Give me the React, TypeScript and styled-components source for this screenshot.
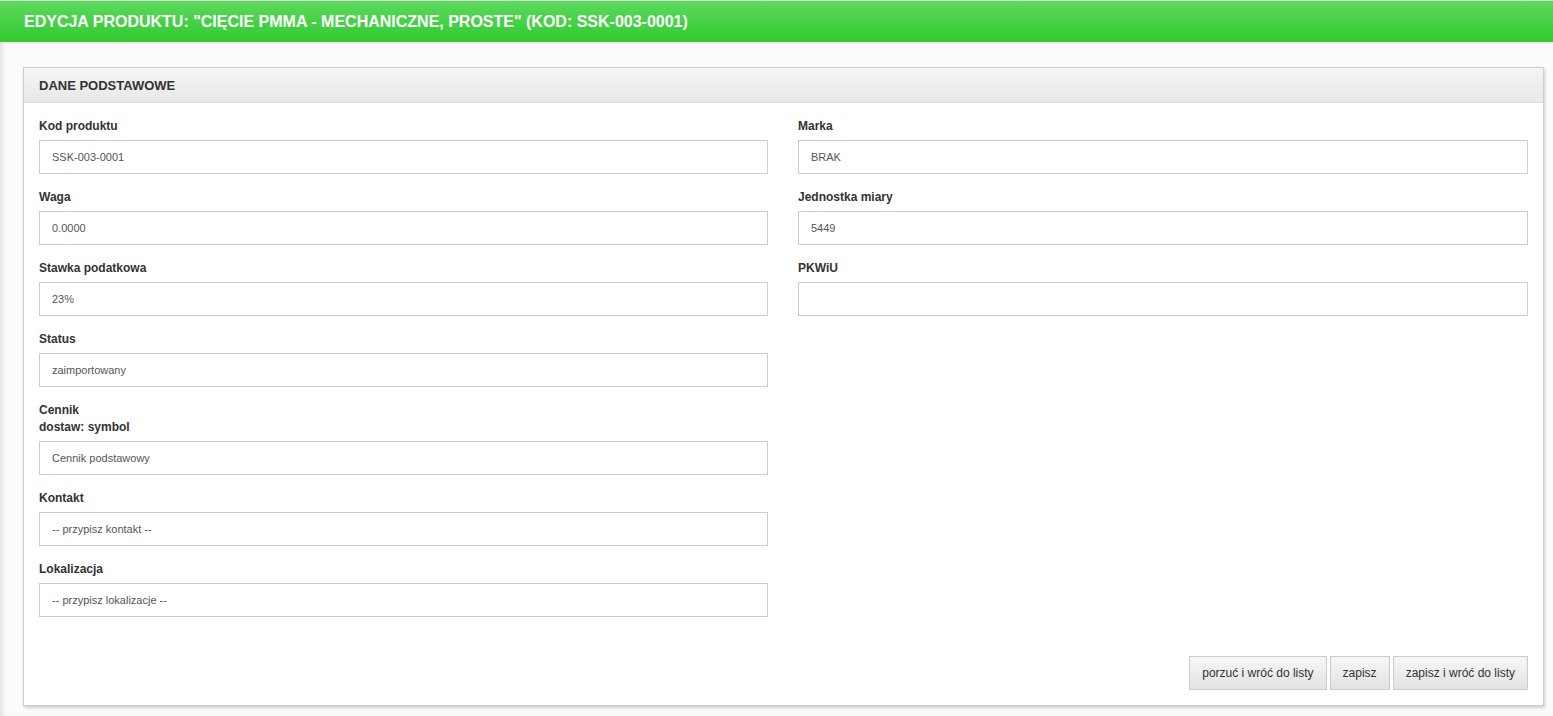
import React from 'react';
import styled, {createGlobalStyle} from 'styled-components';

const GlobalStyle = createGlobalStyle`
  html, body {
    margin: 0;
    padding: 0;
    background: #fbfbfb;
  }
  body {
    font-family: "Liberation Sans", Arial, sans-serif;
    color: #333;
  }
  * {
    box-sizing: border-box;
  }
`;

const Page = styled.div`
  min-height: 716px;
  border-top: 1px solid #d8d8d8;
  box-shadow: inset 5px 0 5px -3px rgba(0, 0, 0, 0.12);
`;

const TopBar = styled.header`
  height: 41px;
  display: flex;
  align-items: center;
  padding-left: 24px;
  background: linear-gradient(to bottom, #5dd95d 0%, #31c931 100%);
  color: #fff;
  font-size: 16px;
  font-weight: bold;
  box-shadow: 0 1px 2px rgba(0, 0, 0, 0.08);
`;

const Content = styled.main`
  padding: 25px 9px 10px 23px;
`;

const Panel = styled.section`
  border: 1px solid #cfcfcf;
  background: #fff;
  box-shadow: 1px 2px 3px rgba(0, 0, 0, 0.18);
`;

const PanelHeader = styled.div`
  height: 35px;
  display: flex;
  align-items: center;
  padding-left: 15px;
  background: linear-gradient(to bottom, #f5f5f5 0%, #e8e8e8 100%);
  border-bottom: 1px solid #dcdcdc;
  font-size: 13px;
  font-weight: bold;
  color: #333;
`;

const PanelBody = styled.div`
  padding: 15px 15px 15px;
`;

const Columns = styled.div`
  display: grid;
  grid-template-columns: 729px 1fr;
  column-gap: 30px;
  align-items: start;
`;

const Column = styled.div`
  display: flex;
  flex-direction: column;
`;

const FormGroup = styled.div`
  margin-bottom: 15px;
`;

const Label = styled.label`
  display: block;
  font-size: 12px;
  line-height: 17px;
  font-weight: bold;
  color: #333;
  margin-bottom: 5px;
`;

const Input = styled.input`
  display: block;
  width: 100%;
  height: 34px;
  padding: 0 12px;
  border: 1px solid #cccccc;
  background: #fff;
  font-family: "Liberation Sans", Arial, sans-serif;
  font-size: 11px;
  color: #555;
  outline: none;
`;

const Actions = styled.div`
  display: flex;
  justify-content: flex-end;
  gap: 3px;
  margin-top: 24px;
`;

const Button = styled.button`
  height: 34px;
  padding: 0 12px;
  border: 1px solid #cccccc;
  background: linear-gradient(to bottom, #f7f7f7 0%, #e2e2e2 100%);
  font-family: "Liberation Sans", Arial, sans-serif;
  font-size: 12px;
  color: #333;
  cursor: pointer;
`;

type Field = {label: React.ReactNode; value: string};

const leftFields: Field[] = [
  {label: 'Kod produktu', value: 'SSK-003-0001'},
  {label: 'Waga', value: '0.0000'},
  {label: 'Stawka podatkowa', value: '23%'},
  {label: 'Status', value: 'zaimportowany'},
  {
    label: (
      <>
        Cennik
        <br />
        dostaw: symbol
      </>
    ),
    value: 'Cennik podstawowy',
  },
  {label: 'Kontakt', value: '-- przypisz kontakt --'},
  {label: 'Lokalizacja', value: '-- przypisz lokalizacje --'},
];

const rightFields: Field[] = [
  {label: 'Marka', value: 'BRAK'},
  {label: 'Jednostka miary', value: '5449'},
  {label: 'PKWiU', value: ''},
];

const FieldList = ({fields}: {fields: Field[]}) => (
  <Column>
    {fields.map((f, i) => (
      <FormGroup key={i}>
        <Label>{f.label}</Label>
        <Input defaultValue={f.value} readOnly />
      </FormGroup>
    ))}
  </Column>
);

export default function App() {
  return (
    <>
      <GlobalStyle />
      <Page>
        <TopBar>
          EDYCJA PRODUKTU: "CIĘCIE PMMA - MECHANICZNE, PROSTE" (KOD: SSK-003-0001)
        </TopBar>
        <Content>
          <Panel>
            <PanelHeader>DANE PODSTAWOWE</PanelHeader>
            <PanelBody>
              <Columns>
                <FieldList fields={leftFields} />
                <FieldList fields={rightFields} />
              </Columns>
              <Actions>
                <Button>porzuć i wróć do listy</Button>
                <Button>zapisz</Button>
                <Button>zapisz i wróć do listy</Button>
              </Actions>
            </PanelBody>
          </Panel>
        </Content>
      </Page>
    </>
  );
}
